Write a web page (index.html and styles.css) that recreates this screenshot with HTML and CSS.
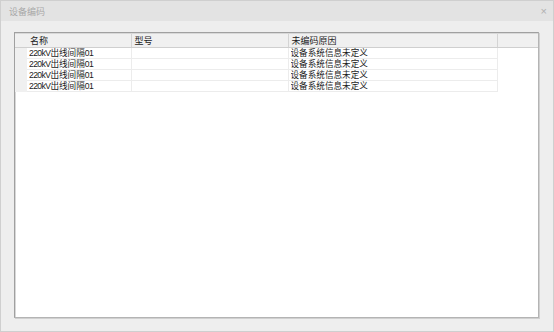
FILE: index.html
```html
<!DOCTYPE html>
<html lang="zh">
<head>
    <meta charset="UTF-8">
    <title>设备编码</title>
    <link rel="stylesheet" href="styles.css">
</head>
<body>
    <div class="window">
        <div class="titlebar">
            <span class="title">设备编码</span>
            <span class="close">×</span>
        </div>
        <div class="content">
            <div class="panel">
                <table class="grid">
                    <colgroup>
                        <col class="c-ind">
                        <col class="c-name">
                        <col class="c-type">
                        <col class="c-reason">
                        <col>
                    </colgroup>
                    <thead>
                        <tr>
                            <th colspan="2" class="first">名称</th>
                            <th>型号</th>
                            <th>未编码原因</th>
                            <th class="filler"></th>
                        </tr>
                    </thead>
                    <tbody>
                        <tr><td class="ind"></td><td><div class="cell"><span class="num">220kV</span>出线间隔<span class="num">01</span></div></td><td></td><td><div class="cell">设备系统信息未定义</div></td><td class="filler"></td></tr>
                        <tr><td class="ind"></td><td><div class="cell"><span class="num">220kV</span>出线间隔<span class="num">01</span></div></td><td></td><td><div class="cell">设备系统信息未定义</div></td><td class="filler"></td></tr>
                        <tr><td class="ind"></td><td><div class="cell"><span class="num">220kV</span>出线间隔<span class="num">01</span></div></td><td></td><td><div class="cell">设备系统信息未定义</div></td><td class="filler"></td></tr>
                        <tr><td class="ind"></td><td><div class="cell"><span class="num">220kV</span>出线间隔<span class="num">01</span></div></td><td></td><td><div class="cell">设备系统信息未定义</div></td><td class="filler"></td></tr>
                    </tbody>
                </table>
            </div>
        </div>
    </div>
</body>
</html>
```

FILE: styles.css
```css
html, body {
    margin: 0;
    padding: 0;
}
body {
    font-family: "Liberation Sans", "Noto Sans CJK SC", sans-serif;
    background: #eeeeee;
}
.window {
    width: 554px;
    height: 332px;
    box-sizing: border-box;
    border: 1px solid #cfcfcf;
    background: #eeeeee;
    display: flex;
    flex-direction: column;
}
.titlebar {
    height: 20px;
    background: #e3e3e3;
    display: flex;
    align-items: center;
    justify-content: space-between;
    padding: 0 6px 0 8px;
}
.title {
    font-size: 9px;
    color: #a8a8a8;
}
.close {
    font-size: 11px;
    color: #b0b0b0;
    line-height: 1;
}
.content {
    flex: 1;
    display: flex;
    padding: 11px 14px 13px 13px;
}
.panel {
    flex: 1;
    background: #ffffff;
    border: 1px solid #a0a0a0;
    border-right-color: #b4b4b4;
    border-bottom-color: #b4b4b4;
    box-shadow: inset 1px 1px 0 #d8d8d8, 1px 1px 0 #d0d0d0;
    padding: 1px 0 0 0;
}
.grid {
    border-collapse: collapse;
    table-layout: fixed;
    width: 100%;
    font-size: 8.6px;
    color: #1a1a1a;
}
.c-ind { width: 12px; }
.c-name { width: 104px; }
.c-type { width: 157px; }
.c-reason { width: 209px; }
.grid th {
    height: 13px;
    padding: 0 3px;
    font-size: 9px;
    font-weight: normal;
    text-align: left;
    background: #f0f0f0;
    border-bottom: 1px solid #cfcfcf;
    border-right: 1px solid #d4d4d4;
    white-space: nowrap;
    line-height: 12px;
}
.grid th.first {
    padding-left: 15px;
}
.grid th.filler {
    border-right: none;
}
.grid td {
    height: 10px;
    padding: 0 2px;
    border-bottom: 1px solid #ececec;
    border-right: 1px solid #ececec;
    white-space: nowrap;
    overflow: hidden;
}
.cell {
    height: 10px;
    line-height: 11px;
    overflow: hidden;
}
.grid .num {
    letter-spacing: -0.6px;
}
.grid td.ind {
    background: #f0f0f0;
    border-bottom-color: #f0f0f0;
    border-right: none;
    padding: 0;
}
.grid td.filler {
    border: none;
}
```
